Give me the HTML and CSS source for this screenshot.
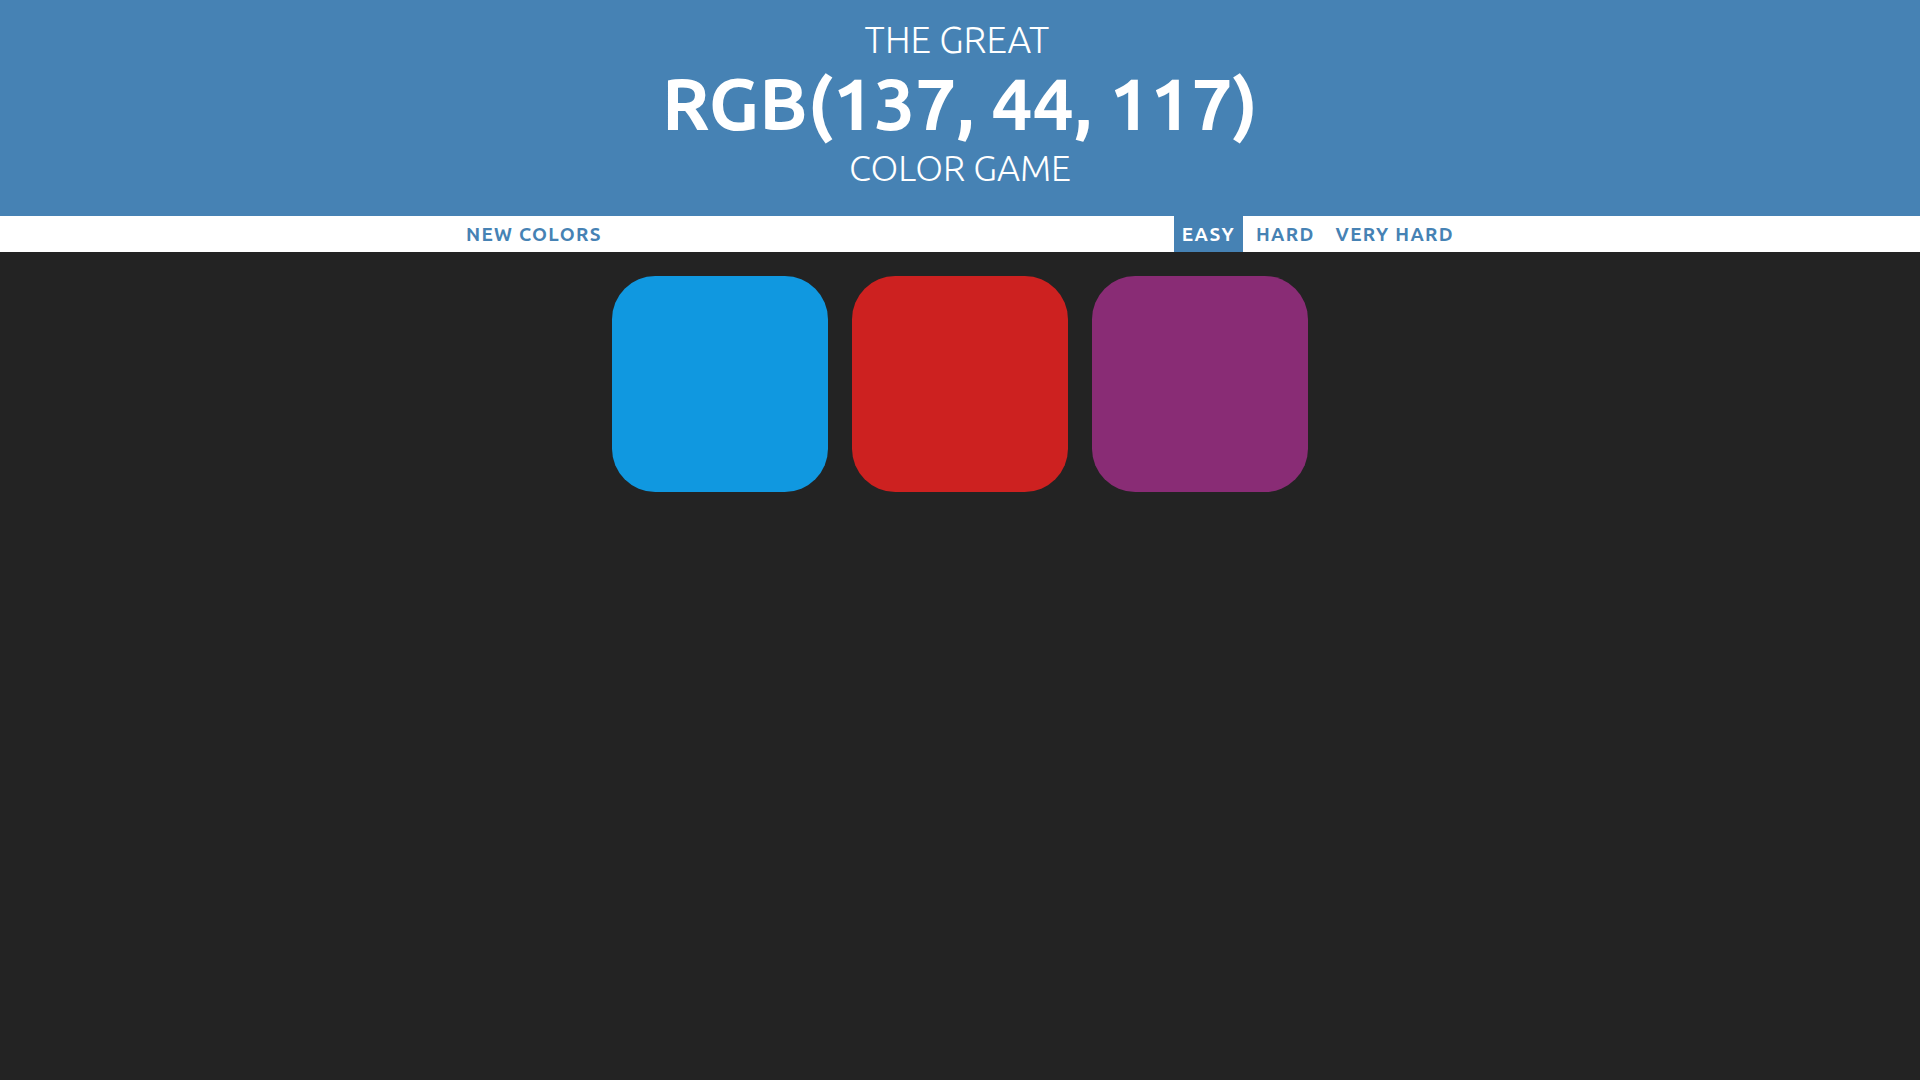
FILE: index.html
```html
<!DOCTYPE html>
<html lang="en">
<head>
<meta charset="utf-8">
<title>Color Game</title>
<link rel="stylesheet" href="styles.css">
</head>
<body>
<h1 class="title">
  <span class="title-top">The Great</span>
  <span class="title-rgb">RGB(137, 44, 117)</span>
  <span class="title-bottom">Color Game</span>
</h1>
<div class="stripe">
  <div class="stripe-inner">
    <button class="btn">New Colors</button>
    <span class="message"></span>
    <div class="modes">
      <button class="btn selected">Easy</button>
      <button class="btn">Hard</button>
      <button class="btn">Very Hard</button>
    </div>
  </div>
</div>
<div class="container">
  <div class="square sq-blue"></div>
  <div class="square sq-red"></div>
  <div class="square sq-purple"></div>
</div>
</body>
</html>
```
FILE: styles.css
```css
body {
  margin: 0;
  background: #232323;
  font-family: "Ubuntu", "Open Sans", "DejaVu Sans", sans-serif;
}

.title {
  margin: 0;
  height: 216px;
  box-sizing: border-box;
  padding-top: 18px;
  background: #4682b4;
  color: #fff;
  text-align: center;
  text-transform: uppercase;
  font-weight: 300;
  display: flex;
  flex-direction: column;
  align-items: center;
}

.title-top {
  font-size: 37px;
  line-height: 44px;
  font-weight: 300;
  margin-right: 6px;
}

.title-rgb {
  font-size: 73px;
  line-height: 82px;
  font-weight: 700;
  letter-spacing: 0;
}

.title-bottom {
  font-size: 36px;
  line-height: 47px;
  font-weight: 300;
}

.stripe {
  background: #fff;
  height: 36px;
}

.stripe-inner {
  width: 1004px;
  height: 100%;
  margin: 0 auto;
  display: flex;
  justify-content: space-between;
  align-items: stretch;
}

.modes {
  display: flex;
  gap: 5px;
}

.btn {
  border: none;
  background: none;
  margin: 0;
  padding: 0 8px;
  height: 100%;
  font-family: inherit;
  font-size: 19px;
  font-weight: 700;
  letter-spacing: 1.3px;
  text-transform: uppercase;
  color: #4682b4;
}

.selected {
  background: #4682b4;
  color: #fff;
}

.container {
  width: 720px;
  margin: 0 auto;
  padding-top: 12px;
  display: flex;
}

.square {
  width: 216px;
  height: 216px;
  margin: 12px;
  border-radius: 20%;
}

.sq-blue { background: #1098e0; }
.sq-red { background: #cd2120; }
.sq-purple { background: #892c75; }
```
